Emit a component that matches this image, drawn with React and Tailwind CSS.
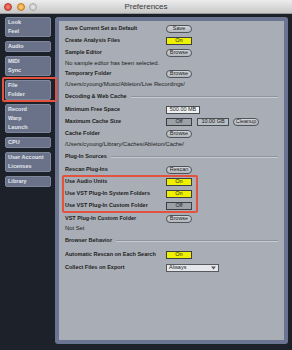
import React from 'react';

const font = "font-['Liberation_Sans',Arial,sans-serif]";

const navItems = [
  { lines: ['Look', 'Feel'] },
  { lines: ['Audio'] },
  { lines: ['MIDI', 'Sync'] },
  { lines: ['File', 'Folder'], marked: true },
  { lines: ['Record', 'Warp', 'Launch'] },
  { lines: ['CPU'] },
  { lines: ['User Account', 'Licenses'] },
  { lines: ['Library'] },
];

const NavButton = ({ lines, marked }) => (
  <div className="relative">
    <div className="w-[46px] border border-[#7f879d] bg-[#6a7289] rounded-[2px] px-[2px] text-[5.5px] leading-[9px] font-bold text-[#e4e7ed] whitespace-nowrap">
      {lines.map((l) => (
        <div key={l}>{l}</div>
      ))}
    </div>
    {/* red annotation box */}
    {marked && (
      <div className="absolute -top-[3px] -bottom-[2px] -left-[3px] -right-[2px] border-2 border-[#e3513f] rounded-[2px]" />
    )}
  </div>
);

const Pill = ({ children, w = 'w-[26px]' }) => (
  <div className={`${w} h-[8px] rounded-full border border-[#50545a] bg-linear-to-b from-[#d4d7db] to-[#b2b7bd] flex items-center justify-center text-[5.5px] leading-none text-[#1c1c1c]`}>
    {children}
  </div>
);

const Toggle = ({ on }) => (
  <div
    className={`w-[26px] h-[8px] border border-[#3b3e43] flex items-center justify-center text-[5.5px] leading-none text-[#1c1c1c] ${
      on ? 'bg-[#eef000]' : 'bg-[#9ba1a9]'
    }`}
  >
    {on ? 'On' : 'Off'}
  </div>
);

const ValueBox = ({ children, w, light }) => (
  <div
    className={`${w} h-[8px] border border-[#4a4d52] flex items-center justify-center text-[5.5px] leading-none text-[#1c1c1c] ${
      light ? 'bg-[#eef0f2]' : 'bg-[#b7bdc4]'
    }`}
  >
    {children}
  </div>
);

const Row = ({ label, h = 'h-[12px]', children }) => (
  <div className={`flex items-center ${h}`}>
    <div className="w-[101px] shrink-0 font-bold text-[5.5px] leading-none text-[#1c1c1c] whitespace-nowrap">{label}</div>
    <div className="flex items-center gap-[4px]">{children}</div>
  </div>
);

const Note = ({ children, h = 'h-[9px]' }) => (
  <div className={`${h} flex items-center text-[5.8px] leading-none text-[#1c1c1c] whitespace-nowrap`}>{children}</div>
);

const Header = ({ title }) => (
  <div className="h-[15px] flex items-center gap-[4px]">
    <span className="font-bold text-[5.5px] leading-none text-[#1c1c1c] whitespace-nowrap">{title}</span>
    <div className="flex-1 h-[2px] border-t border-[#8e949c] bg-[#c7cbd1]" />
  </div>
);

export default function App() {
  return (
    <div className={`w-[292px] h-[350px] bg-[#1d2129] overflow-hidden ${font}`}>
      {/* title bar */}
      <div className="h-[14px] grid grid-cols-[1fr_auto_1fr] items-center bg-linear-to-b from-[#ededed] to-[#c8c8c8] border-b border-[#9a9a9a]">
        <div className="flex items-center gap-[4.5px] pl-[4px]">
          <span className="w-[8px] h-[8px] rounded-full bg-radial from-[#f58a7c] to-[#d8382b] border border-[#b53428]" />
          <span className="w-[8px] h-[8px] rounded-full bg-radial from-[#f9cf80] to-[#e99a25] border border-[#c27c1f]" />
          <span className="w-[8px] h-[8px] rounded-full bg-radial from-[#e6e6e6] to-[#c4c4c4] border border-[#a9a9a9]" />
        </div>
        <div className="text-[8px] leading-none text-[#3a3a3a]">Preferences</div>
        <div />
      </div>

      <div className="flex">
        {/* left navigation */}
        <div className="w-[55px] shrink-0 pl-[5px] pt-[3px] flex flex-col gap-[4px]">
          {navItems.map((it) => (
            <NavButton key={it.lines.join()} {...it} />
          ))}
        </div>

        {/* main panel */}
        <div className="mt-[3px] w-[233px] h-[327px] border-[4px] border-[#6b7490] rounded-[3px] bg-[#a9aeb6] pl-[6px] pr-[6px] pt-[2px] flex flex-col">
          <Row label="Save Current Set as Default">
            <Pill>Save</Pill>
          </Row>
          <Row label="Create Analysis Files">
            <Toggle on />
          </Row>
          <Row label="Sample Editor">
            <Pill>Browse</Pill>
          </Row>
          <Note>No sample editor has been selected.</Note>
          <Row label="Temporary Folder">
            <Pill>Browse</Pill>
          </Row>
          <Note>/Users/cyoung/Music/Ableton/Live Recordings/</Note>

          <Header title="Decoding & Web Cache" />
          <Row label="Minimum Free Space">
            <ValueBox w="w-[34px]" light>500.00 MB</ValueBox>
          </Row>
          <Row label="Maximum Cache Size">
            <div className="flex items-center gap-[5px]">
              <Toggle />
              <ValueBox w="w-[32px]">10.00 GB</ValueBox>
            </div>
            <Pill>Cleanup</Pill>
          </Row>
          <Row label="Cache Folder">
            <Pill>Browse</Pill>
          </Row>
          <Note>/Users/cyoung/Library/Caches/Ableton/Cache/</Note>

          <Header title="Plug-In Sources" />
          <Row label="Rescan Plug-Ins">
            <Pill>Rescan</Pill>
          </Row>
          <div className="relative w-[127px]">
            <Row label="Use Audio Units">
              <Toggle on />
            </Row>
            <Row label="Use VST Plug-In System Folders">
              <Toggle on />
            </Row>
            <Row label="Use VST Plug-In Custom Folder">
              <Toggle />
            </Row>
            <div className="absolute -top-[1px] -bottom-[1px] -left-[3px] -right-[6px] border-2 border-[#e3513f] rounded-[2px]" />
          </div>
          <Row label="VST Plug-In Custom Folder" h="h-[13px]">
            <Pill>Browse</Pill>
          </Row>
          <Note h="h-[8px]">Not Set</Note>

          <Header title="Browser Behavior" />
          <Row label="Automatic Rescan on Each Search" h="h-[13px]">
            <Toggle on />
          </Row>
          <Row label="Collect Files on Export" h="h-[13px]">
            <div className="w-[53px] h-[8px] border border-[#55585d] bg-[#e5e7ea] flex items-center justify-between pl-[2px] pr-[2px] text-[5.5px] leading-none text-[#1c1c1c]">
              <span>Always</span>
              <svg width="5" height="4" viewBox="0 0 5 4">
                <path d="M0 0.5 H5 L2.5 3.5 Z" fill="#555a60" />
              </svg>
            </div>
          </Row>
        </div>
      </div>
    </div>
  );
}
